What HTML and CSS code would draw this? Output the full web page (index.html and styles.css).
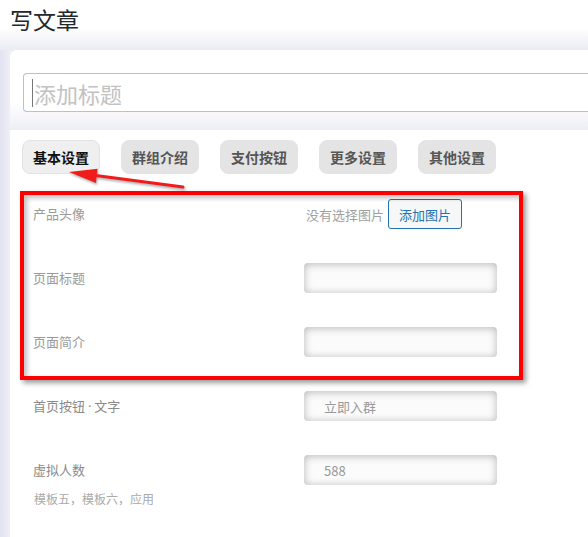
FILE: index.html
```html
<!DOCTYPE html>
<html lang="zh-CN">
  <head>
    <meta charset="UTF-8" />
    <meta name="viewport" content="width=device-width, initial-scale=1.0" />
    <title>写文章</title>
    <link rel="stylesheet" href="styles.css">
  </head>
  <body>
    <header class="head">
      <h1>写文章</h1>
    </header>

    <div class="wrap">
      <div class="card">
        <div class="card-top">
          <div class="title-box">
            <input class="title-input" type="text" placeholder="添加标题">
            <span class="caret"></span>
          </div>
        </div>

        <div class="card-body">
          <div class="tabs">
            <button class="tab active">基本设置</button>
            <button class="tab">群组介绍</button>
            <button class="tab">支付按钮</button>
            <button class="tab">更多设置</button>
            <button class="tab">其他设置</button>
          </div>

          <div class="row">
            <label class="label">产品头像</label>
            <div class="field">
              <span class="no-pic">没有选择图片</span>
              <button class="add-pic">添加图片</button>
            </div>
          </div>
          <div class="row">
            <label class="label">页面标题</label>
            <input class="text" type="text">
          </div>
          <div class="row">
            <label class="label">页面简介</label>
            <input class="text" type="text">
          </div>
          <div class="row">
            <label class="label dark">首页按钮 <span class="dot">·</span> 文字</label>
            <input class="text" type="text" value="立即入群">
          </div>
          <div class="row row-last">
            <label class="label dark">虚拟人数</label>
            <input class="text" type="text" value="588">
          </div>
          <p class="note">模板五，模板六，应用</p>

          <!-- annotation -->
          <div class="mark"></div>
          <svg class="arrow" width="130" height="35" viewBox="0 0 130 35">
            <line x1="34" y1="15.3" x2="123" y2="27" stroke="#f21b1b" stroke-width="3" stroke-linecap="round" />
            <polygon points="9,12 37.5,8.7 36,23" fill="#f21b1b" />
          </svg>
        </div>
      </div>
    </div>
  </body>
</html>
```

FILE: styles.css
```css
body {
  font-family: "Noto Sans CJK SC", "Noto Sans", sans-serif;
  background-color: #fff;
  color: #1d2327;
  margin: 0;
  padding: 0;
  overflow: hidden;
}

.head {
  padding: 4px 10px 16px;
  background: linear-gradient(to bottom, #fff 55%, #ebebf5 100%);
}

.head h1 {
  font-size: 23px;
  font-weight: 400;
  line-height: 30px;
  margin: 0;
  color: #23282d;
}

.wrap {
  background: linear-gradient(to right, #e2e2f1 0, #efeff8 10px);
  padding-left: 10px;
}

.card {
  background-color: #fff;
  border-top-left-radius: 8px;
  min-height: 487px;
}

.card-top {
  padding: 23px 0 18px 13px;
  border-top-left-radius: 8px;
  background: linear-gradient(to bottom, #fff 65%, #ededf6 100%);
}

.title-box {
  position: relative;
}

.title-input {
  display: block;
  box-sizing: border-box;
  width: 100%;
  height: 39px;
  padding: 0 10px;
  border: 1px solid #a7c6e2;
  border-right: none;
  border-radius: 4px 0 0 4px;
  background-color: #fff;
  font-family: inherit;
  font-size: 22px;
  outline: none;
}

.title-input::placeholder {
  color: #c2c2c2;
}

.caret {
  position: absolute;
  left: 9px;
  top: 6px;
  width: 1px;
  height: 28px;
  background-color: #777;
}

.card-body {
  position: relative;
  padding: 10px 0 30px 12px;
}

.tabs {
  display: flex;
  gap: 21px;
  margin-bottom: 8px;
}

.tab {
  height: 34px;
  padding: 0 10px;
  border: 1px solid #e4e4e4;
  border-radius: 8px;
  background-color: #e4e4e4;
  color: #555;
  font-family: inherit;
  font-size: 14px;
  font-weight: 700;
  cursor: pointer;
}

.tab.active {
  background-color: #efefef;
  border-color: #e2e2e2;
  color: #111;
}

.row {
  display: flex;
  align-items: center;
  height: 64px;
}

.row-last {
  height: auto;
  padding: 17px 0 4px;
}

.label {
  box-sizing: border-box;
  width: 282px;
  padding-left: 11px;
  padding-bottom: 2px;
  font-size: 13px;
  color: #9a9a9a;
}

.label.dark {
  color: #8a8a8a;
}

.dot {
  font-family: "Noto Sans", sans-serif;
}

.field {
  display: flex;
  align-items: center;
  gap: 4px;
  padding-left: 2px;
}

.no-pic {
  font-size: 13px;
  color: #a0a0a0;
}

.add-pic {
  height: 30px;
  padding: 0 10px;
  border: 1px solid #2271b1;
  border-radius: 3px;
  background-color: #f6f7f7;
  color: #2271b1;
  font-family: inherit;
  font-size: 13px;
  cursor: pointer;
}

.text {
  box-sizing: border-box;
  width: 193px;
  height: 30px;
  padding: 0 20px;
  border: none;
  border-radius: 4px;
  background-color: #fbfbfb;
  box-shadow: inset 0 1px 8px rgba(0, 0, 0, 0.28);
  color: #999;
  font-family: inherit;
  font-size: 13px;
  outline: none;
}

.note {
  margin: 0;
  padding-left: 12px;
  font-size: 12px;
  line-height: 20px;
  color: #aaa;
}

.mark {
  position: absolute;
  left: 10px;
  top: 61px;
  box-sizing: border-box;
  width: 503px;
  height: 189px;
  border: 4px solid #ff0000;
  box-shadow: 3px 3px 5px rgba(0, 0, 0, 0.4), inset 3px 3px 5px rgba(0, 0, 0, 0.25);
  pointer-events: none;
}

.arrow {
  position: absolute;
  left: 50px;
  top: 30px;
  filter: drop-shadow(1px 2px 1px rgba(0, 0, 0, 0.3));
}
```
